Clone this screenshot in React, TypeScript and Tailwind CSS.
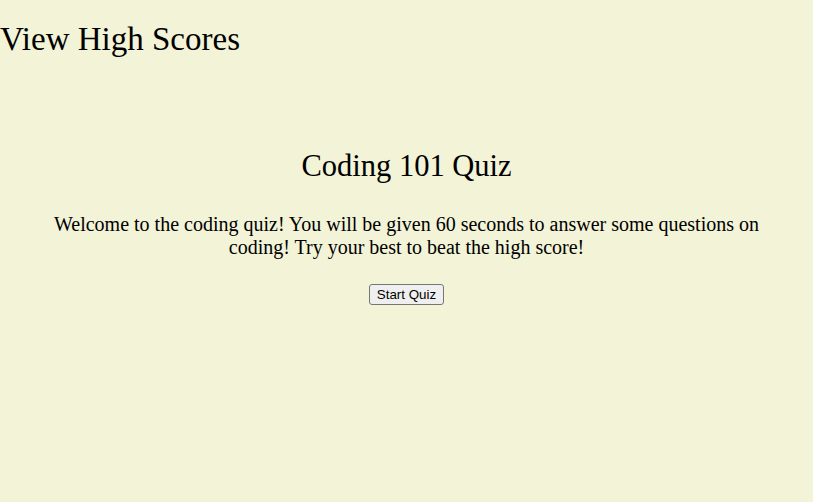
export default function App() {
  return (
    <div className="min-h-[502px] w-full bg-[#f2f3d7] text-black font-['Liberation_Serif',serif]">
      <header>
        <h1 className="m-0 pt-[21px] text-[33px] leading-[37px]">View High Scores</h1>
      </header>
      <main className="flex flex-col items-center pt-[90px] text-center">
        <h2 className="text-[30.5px] leading-[37px]">Coding 101 Quiz</h2>
        <p className="mt-[28px] px-[45px] text-[20px] leading-[23px]">
          Welcome to the coding quiz! You will be given 60 seconds to answer some questions on
          coding! Try your best to beat the high score!
        </p>
        <button className="mt-[25px] h-[21px] rounded-[3px] border border-[#767676] bg-[#efefef] px-[7px] font-['Liberation_Sans',sans-serif] text-[13.33px] leading-[15px] text-black">
          Start Quiz
        </button>
      </main>
    </div>
  );
}
